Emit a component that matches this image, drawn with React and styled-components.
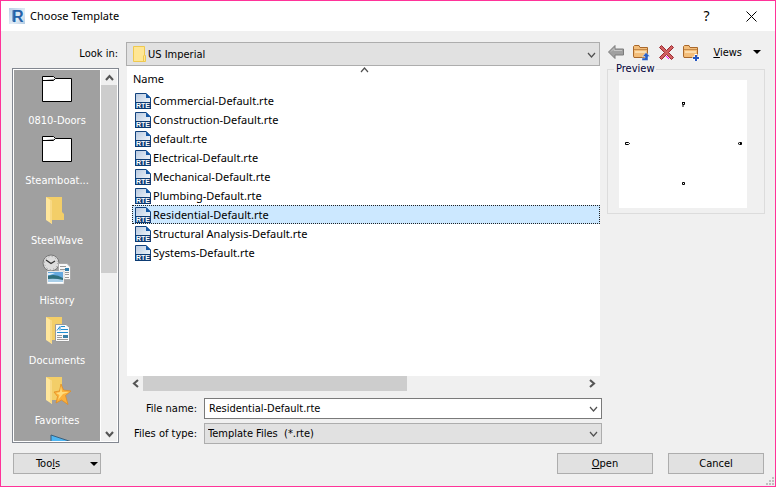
import React, { useState } from "react";
import styled, { createGlobalStyle } from "styled-components";

const GlobalStyle = createGlobalStyle`
  * {
    box-sizing: border-box;
  }
  body {
    margin: 0;
  }
  body, button, input, select {
    font-family: "DejaVu Sans Condensed", "DejaVu Sans", sans-serif;
    font-size: 11px;
    color: #000;
  }
  button {
    border: none;
    background: none;
    padding: 0;
  }
  svg {
    display: block;
    flex: none;
  }
`;

const Dialog = styled.div`
  display: flex;
  flex-direction: column;
  position: relative;
  height: 100vh;
  min-height: 400px;
  background: #f0f0f0;
  border: 1px solid #ff3399;
`;

const TitleBar = styled.header`
  display: flex;
  align-items: center;
  height: 30px;
  padding: 0 18px 0 8px;
  background: #fff;
`;

const Title = styled.h1`
  flex: 1;
  margin: 0 0 0 5px;
  font: 11px/16px "Noto Sans", sans-serif;
`;

const TitleButton = styled.button`
  display: flex;
  align-items: center;
  justify-content: center;
  width: 11px;
  height: 16px;
  margin-left: 34px;
  font: 14px/16px "Noto Sans", sans-serif;
`;

const Body = styled.main`
  display: flex;
  flex: 1;
  gap: 7px;
  min-height: 0;
  padding: 11px 10px 0 11px;
`;

const SideColumn = styled.div`
  display: flex;
  flex-direction: column;
  flex: none;
  width: 107px;
  padding-bottom: 1px;
`;

const LookIn = styled.label`
  height: 24px;
  margin-bottom: 2px;
  padding-right: 1px;
  line-height: 24px;
  text-align: right;
`;

const Places = styled.nav`
  display: flex;
  flex: 1;
  gap: 1px;
  min-height: 0;
  padding: 1px;
  background: #fff;
  border: 1px solid #828790;
`;

const PlaceList = styled.div`
  flex: 1;
  overflow: hidden;
  background: #a0a0a0;
`;

const Place = styled.button`
  display: flex;
  flex-direction: column;
  align-items: center;
  gap: 9px;
  width: 100%;
  height: 60px;
  padding-top: 3px;
  line-height: 14px;
  color: #fff;
`;

const VScroll = styled.div`
  display: flex;
  flex-direction: column;
  width: 16px;
  background: #f0f0f0;
`;

const HScroll = styled.div`
  display: flex;
  height: 15px;
  padding: 0 1px;
`;

const ScrollButton = styled.button`
  display: flex;
  align-items: center;
  justify-content: center;
  flex: none;
  width: 16px;
  height: 15px;
`;

const Track = styled.div`
  display: flex;
  flex: 1;
  flex-direction: ${p => (p.$vertical ? "column" : "row")};
`;

const Thumb = styled.div`
  flex: 0 0 ${p => p.$size};
  background: #cdcdcd;
`;

const MainColumn = styled.div`
  display: flex;
  flex: 1;
  flex-direction: column;
  gap: 7px;
  min-width: 0;
`;

const Upper = styled.div`
  display: flex;
  flex: 1;
  gap: 7px;
  min-height: 0;
`;

const Browser = styled.div`
  display: flex;
  flex: 1;
  flex-direction: column;
  min-width: 0;
`;

const Combo = styled.div`
  display: flex;
  align-items: center;
  position: relative;
  height: ${p => (p.$tall ? "24px" : "21px")};
`;

const comboBox = `
  width: 100%;
  height: 100%;
  appearance: none;
  border-radius: 0;
  outline: none;
`;

const Select = styled.select`
  ${comboBox}
  padding: 0 20px 0 ${p => (p.$withIcon ? "21px" : "3px")};
  background: #e1e1e1;
  border: 1px solid #adadad;
`;

const TextBox = styled.input`
  ${comboBox}
  padding: 0 20px 0 4px;
  background: #fff;
  border: 1px solid #7a7a7a;
`;

const ComboIcon = styled.span`
  position: absolute;
  left: 7px;
  pointer-events: none;
`;

const ComboArrow = styled.span`
  position: absolute;
  right: 3px;
  pointer-events: none;
`;

const FileArea = styled.div`
  flex: 1;
  position: relative;
  overflow: hidden;
  margin-left: 1px;
  background: #fff;
`;

const SortMark = styled.span`
  position: absolute;
  top: -2px;
  left: 49%;
`;

const FileTable = styled.table`
  width: 100%;
  border-collapse: collapse;
  font: 11px/19px "Noto Sans", sans-serif;
`;

const NameHead = styled.th`
  height: 25px;
  padding: 0 0 0 6px;
  font-weight: normal;
  text-align: left;
`;

const FileCell = styled.td`
  padding: 0 0 0 5px;
`;

const FileRow = styled.div`
  display: flex;
  align-items: center;
  gap: 2px;
  height: 19px;
  padding-left: 2px;
  background: ${p => (p.$selected ? "#cce8ff" : "none")};
  border: 1px ${p => (p.$selected ? "dotted #222" : "solid transparent")};
`;

const PreviewColumn = styled.div`
  flex: none;
  width: 158px;
`;

const Toolbar = styled.div`
  display: flex;
  align-items: center;
  gap: 9px;
  height: 20px;
  padding: 0 4px 0 1px;
`;

const ToolButton = styled.button`
  display: flex;
  align-items: center;
  height: 20px;
`;

const ViewsButton = styled(ToolButton)`
  gap: 11px;
  margin-left: auto;
`;

const Preview = styled.fieldset`
  height: 152px;
  margin: 0;
  padding: 4px 17px 5px 11px;
  border: 1px solid #dcdcdc;
`;

const Legend = styled.legend`
  margin-left: -5px;
  padding: 0 2px;
  line-height: 14px;
  color: #000038;
`;

const Canvas = styled.svg`
  width: 128px;
  height: 128px;
  background: #fff;
`;

const Fields = styled.div`
  display: grid;
  grid-template-columns: 71px 1fr;
  gap: 4px 7px;
  align-items: center;
  padding-right: 163px;
`;

const FieldLabel = styled.label`
  text-align: right;
`;

const Footer = styled.footer`
  display: flex;
  gap: 15px;
  padding: 9px 11px 12px 12px;
`;

const PushButton = styled.button`
  display: flex;
  align-items: center;
  justify-content: center;
  width: ${p => (p.$menu ? "88px" : "96px")};
  height: 21px;
  margin-right: ${p => (p.$menu ? "auto" : "0")};
  padding-right: ${p => (p.$menu ? "2px" : "0")};
  background: #e1e1e1;
  border: 1px solid #adadad;
`;

const MenuText = styled.span`
  flex: 1;
  padding-right: 8px;
  text-align: center;
`;

const Grip = styled.svg`
  position: absolute;
  right: 1px;
  bottom: 1px;
`;

const Chevron = ({ d = "down", thin }) => {
  const paths = {
    up: "M2 8 L5.5 4 L9 8",
    down: "M2 4 L5.5 8 L9 4",
    left: "M8 2 L4 5.5 L8 9",
    right: "M4 2 L8 5.5 L4 9"
  };
  return (
    <svg width="11" height="11" viewBox="0 0 11 11">
      <path
        d={paths[d]}
        fill="none"
        stroke={thin ? "#505050" : "#555"}
        strokeWidth={thin ? 1.2 : 2.1}
      />
    </svg>
  );
};

const Caret = () => (
  <svg width="8" height="4" viewBox="0 0 8 4">
    <path d="M0 0H8L4 4Z" fill="#000" />
  </svg>
);

const AppLogo = () => (
  <svg width="16" height="16" viewBox="0 0 16 16">
    <defs>
      <linearGradient id="logoBg" x1="0" y1="0" x2="1" y2="1">
        <stop offset="0" stopColor="#b9cfe6" />
        <stop offset=".6" stopColor="#e3edf6" />
        <stop offset="1" stopColor="#b4cbe2" />
      </linearGradient>
    </defs>
    <rect width="16" height="16" fill="url(#logoBg)" />
    <path d="M3 2L5.500 3V14.500L3 13Z" fill="#7fb0dc" />
    <text x="3" y="14" fontFamily="Liberation Sans" fontSize="16" fontWeight="bold" fill="#2562a8">
      R
    </text>
  </svg>
);

const RteIcon = () => (
  <svg width="16" height="16" viewBox="0 0 16 16">
    <defs>
      <linearGradient id="rtePage" x1="0" y1="0" x2="1" y2="1">
        <stop offset="0" stopColor="#b7c9e0" />
        <stop offset="1" stopColor="#fff" />
      </linearGradient>
    </defs>
    <path d="M0.500 0.500H11L15.500 5V15.500H0.500Z" fill="url(#rtePage)" stroke="#12427c" />
    <path d="M11 0V5H16Z" fill="#1558a5" />
    <rect y="9" width="16" height="7" fill="#0d3b73" />
    <text x="1" y="15" fontFamily="Liberation Sans" fontSize="7" fontWeight="bold" fill="#fff">
      RTE
    </text>
  </svg>
);

const SmallFolder = () => (
  <svg width="13" height="16" viewBox="0 0 13 16">
    <path d="M0.500 0.500H11.500V9.500H12.500V15.500H0.500Z" fill="#ffe694" stroke="#efc94f" />
    <path d="M10.500 15V9.500" stroke="#efc94f" />
  </svg>
);

const PlainFolder = () => (
  <svg width="32" height="32" viewBox="0 0 32 32">
    <path
      d="M1.500 3.500H12.500L14.500 5.500H30.500V28.500H1.500ZM1.500 7.500H12.500L14.500 5.500"
      fill="#fff"
      stroke="#000"
    />
  </svg>
);

const yellowFolder = (
  <>
    <path d="M5 4H21V19L23 21V27H5Z" fill="#f3ce68" />
    <path d="M5 4L11 8V31L5 27Z" fill="#ffe69b" />
    <path d="M11 8V31L9 29V7Z" fill="#f8d985" />
  </>
);

const YellowFolder = () => (
  <svg width="32" height="32" viewBox="0 0 32 32">
    {yellowFolder}
  </svg>
);

const HistoryIcon = () => (
  <svg width="32" height="32" viewBox="0 0 32 32">
    <circle cx="10" cy="10" r="8" fill="#ddd" stroke="#777" />
    <circle cx="10" cy="10" r="6.500" fill="none" stroke="#999" strokeDasharray="1 2.400" />
    <path d="M5 7L10 10.500L14 8" fill="none" stroke="#333" strokeWidth="1.300" />
    <path d="M17.500 10.500H26L29.500 14V26.500H17.500Z" fill="#f8f8f8" stroke="#aaa" />
    <path d="M19 13.500H25M19 16.500H28M24 19.500H28M24 21.500H28M24 24.500H28" stroke="#999" />
    <rect x="24" y="15" width="4" height="3" fill="#347fae" />
    <rect x="6" y="18" width="17" height="13" fill="#fff" stroke="#aaa" strokeWidth=".5" />
    <rect x="7" y="19" width="15" height="10" fill="#64a8de" />
    <path d="M7 23Q14 20 22 25V27H7Z" fill="#2f6f7c" />
    <path d="M7 26Q14 25 22 27V29H7Z" fill="#a9cfe9" />
    <path d="M7 20H14L9 22H7Z" fill="#d8ecfa" />
  </svg>
);

const DocumentsIcon = () => (
  <svg width="32" height="32" viewBox="0 0 32 32">
    {yellowFolder}
    <path d="M14.500 11.500H25L28.500 14.500V28.500H14.500Z" fill="#fafafa" stroke="#999" />
    <path d="M16 17.500L19 13.500V17.500M20 13.500H24M20 16.500H27M16 19.500H27" fill="none" stroke="#1f8ed2" />
    <path d="M16 22.500H21M16 24.500H21M16 26.500H27" stroke="#999" />
    <rect x="22" y="22" width="5" height="3" fill="#397fa6" />
  </svg>
);

const FavoritesIcon = () => (
  <svg width="32" height="32" viewBox="0 0 32 32">
    {yellowFolder}
    <path
      d="M20 11L22.500 17L30 18L24.500 22.500L27 31.500L20.500 27L15 30L16.500 23.500L13 19L18.500 18Z"
      fill="#fbb03b"
      stroke="#e08a1e"
      strokeWidth=".7"
    />
    <path d="M20 13L21 19L28 19L22 21L17 27L18.500 22L15 20L19 19Z" fill="#ffdb7a" />
  </svg>
);

const DesktopIcon = () => (
  <svg width="32" height="32" viewBox="0 0 32 32">
    <path d="M10 2L31 9V30H10Z" fill="#4fb6f2" stroke="#3a5f7d" />
  </svg>
);

const BackArrow = () => (
  <svg width="16" height="16" viewBox="0 0 16 16">
    <path
      d="M0.500 8L7 1.500V5H15.500V11H7V14.500Z"
      fill="#a0a0a0"
      stroke="#7c7c7c"
      strokeLinejoin="round"
    />
    <path d="M3 7.500L6 4.500V6.500H14" fill="none" stroke="#c4c4c4" />
  </svg>
);

const folderBase = (
  <>
    <path
      d="M0.500 12V2.500L1.500 1.500H6L7 3.500H14.500V13.500H1Z"
      fill="#f3bd79"
      stroke="#a9682b"
      strokeLinejoin="round"
    />
    <path d="M1 5.500H14" stroke="#c58a48" />
    <path d="M2 7H13V9H2Z" fill="#fbdcac" />
  </>
);

const UpFolder = () => (
  <svg width="17" height="17" viewBox="0 0 17 17">
    {folderBase}
    <path d="M9 16.500V14H12V12.500H9.500L13 8.500L17 12.500H15V16.500Z" fill="#2a5fc4" stroke="#fff" strokeWidth=".4" />
  </svg>
);

const NewFolder = () => (
  <svg width="17" height="17" viewBox="0 0 17 17">
    {folderBase}
    <path d="M13 10V17M9.500 14H17" stroke="#fff" strokeWidth="3" />
    <path d="M13 11V17M10 14H16" stroke="#2456c0" strokeWidth="2" />
  </svg>
);

const DeleteIcon = () => (
  <svg width="15" height="15" viewBox="0 0 15 15">
    <path
      d="M2.500 0.500L7.500 5.500L12.500 0.500L14.500 2.500L9.500 7.500L14.500 12.500L12.500 14.500L7.500 9.500L2.500 14.500L0.500 12.500L5.500 7.500L0.500 2.500Z"
      fill="#d06060"
      stroke="#9c2830"
      strokeLinejoin="round"
    />
    <path d="M7 11h1v1h1v1h1v1h-1v-1h-1v-1h-1z" fill="#f0f" />
  </svg>
);

const places = [
  { name: "0810-Doors", Icon: PlainFolder },
  { name: "Steamboat...", Icon: PlainFolder },
  { name: "SteelWave", Icon: YellowFolder },
  { name: "History", Icon: HistoryIcon },
  { name: "Documents", Icon: DocumentsIcon },
  { name: "Favorites", Icon: FavoritesIcon },
  { name: "", Icon: DesktopIcon }
];

const files = [
  "Commercial-Default.rte",
  "Construction-Default.rte",
  "default.rte",
  "Electrical-Default.rte",
  "Mechanical-Default.rte",
  "Plumbing-Default.rte",
  "Residential-Default.rte",
  "Structural Analysis-Default.rte",
  "Systems-Default.rte"
];

const App = () => {
  const [selected, setSelected] = useState("Residential-Default.rte");

  return (
    <>
      <GlobalStyle />
      <Dialog>
        <TitleBar>
          <AppLogo />
          <Title>Choose Template</Title>
          <TitleButton>?</TitleButton>
          <TitleButton aria-label="Close">
            <svg width="11" height="11" viewBox="0 0 11 11">
              <path d="M0.500 0.500L10.500 10.500M10.500 0.500L0.500 10.500" stroke="#000" />
            </svg>
          </TitleButton>
        </TitleBar>

        <Body>
          <SideColumn>
            <LookIn htmlFor="lookin">Look in:</LookIn>
            <Places>
              <PlaceList>
                {places.map(({ name, Icon }, i) => (
                  <Place key={i}>
                    <Icon />
                    {name}
                  </Place>
                ))}
              </PlaceList>
              <VScroll>
                <ScrollButton aria-label="Scroll up">
                  <Chevron d="up" />
                </ScrollButton>
                <Track $vertical>
                  <Thumb $size="55%" />
                </Track>
                <ScrollButton aria-label="Scroll down">
                  <Chevron />
                </ScrollButton>
              </VScroll>
            </Places>
          </SideColumn>

          <MainColumn>
            <Upper>
              <Browser>
                <Combo $tall>
                  <Select id="lookin" $withIcon>
                    <option>US Imperial</option>
                  </Select>
                  <ComboIcon>
                    <SmallFolder />
                  </ComboIcon>
                  <ComboArrow>
                    <Chevron thin />
                  </ComboArrow>
                </Combo>
                <FileArea>
                  <SortMark>
                    <Chevron d="up" thin />
                  </SortMark>
                  <FileTable>
                    <thead>
                      <tr>
                        <NameHead>Name</NameHead>
                      </tr>
                    </thead>
                    <tbody>
                      {files.map(file => (
                        <tr key={file} onClick={() => setSelected(file)}>
                          <FileCell>
                            <FileRow $selected={file === selected}>
                              <RteIcon />
                              {file}
                            </FileRow>
                          </FileCell>
                        </tr>
                      ))}
                    </tbody>
                  </FileTable>
                </FileArea>
                <HScroll>
                  <ScrollButton aria-label="Scroll left">
                    <Chevron d="left" />
                  </ScrollButton>
                  <Track>
                    <Thumb $size="60%" />
                  </Track>
                  <ScrollButton aria-label="Scroll right">
                    <Chevron d="right" />
                  </ScrollButton>
                </HScroll>
              </Browser>

              <PreviewColumn>
                <Toolbar>
                  <ToolButton aria-label="Back">
                    <BackArrow />
                  </ToolButton>
                  <ToolButton aria-label="Up one level">
                    <UpFolder />
                  </ToolButton>
                  <ToolButton aria-label="Delete">
                    <DeleteIcon />
                  </ToolButton>
                  <ToolButton aria-label="New folder">
                    <NewFolder />
                  </ToolButton>
                  <ViewsButton>
                    <span>
                      <u>V</u>iews
                    </span>
                    <Caret />
                  </ViewsButton>
                </Toolbar>
                <Preview>
                  <Legend>Preview</Legend>
                  <Canvas viewBox="0 0 128 128" fill="none" stroke="#000">
                    <path d="M63.500 22V24.500H65.500V22M64 25V27M63 22.500H66" />
                    <path d="M6.500 62.500H9.500L10.500 63.500L9.500 64.500H6.500Z" />
                    <path d="M119 63.500L120.500 62.500H122.500V64.500H120.500ZM121 63.500H122" />
                    <path d="M63.500 102.500H65.500V104.500H63.500Z" />
                  </Canvas>
                </Preview>
              </PreviewColumn>
            </Upper>

            <Fields>
              <FieldLabel htmlFor="filename">File name:</FieldLabel>
              <Combo>
                <TextBox
                  id="filename"
                  value={selected}
                  onChange={e => setSelected(e.target.value)}
                />
                <ComboArrow>
                  <Chevron thin />
                </ComboArrow>
              </Combo>
              <FieldLabel htmlFor="filetype">Files of type:</FieldLabel>
              <Combo>
                <Select id="filetype">
                  <option>Template Files{"\u00a0 "}(*.rte)</option>
                </Select>
                <ComboArrow>
                  <Chevron thin />
                </ComboArrow>
              </Combo>
            </Fields>
          </MainColumn>
        </Body>

        <Footer>
          <PushButton $menu>
            <MenuText>
              Too<u>l</u>s
            </MenuText>
            <Caret />
          </PushButton>
          <PushButton>
            <span>
              <u>O</u>pen
            </span>
          </PushButton>
          <PushButton>Cancel</PushButton>
        </Footer>

        <Grip width="8" height="8" viewBox="0 0 8 8" fill="#bfbfbf">
          <path d="M6 0h2v2h-2zM3 3h2v2h-2zM6 3h2v2h-2zM0 6h2v2h-2zM3 6h2v2h-2zM6 6h2v2h-2z" />
        </Grip>
      </Dialog>
    </>
  );
};

export default App;
